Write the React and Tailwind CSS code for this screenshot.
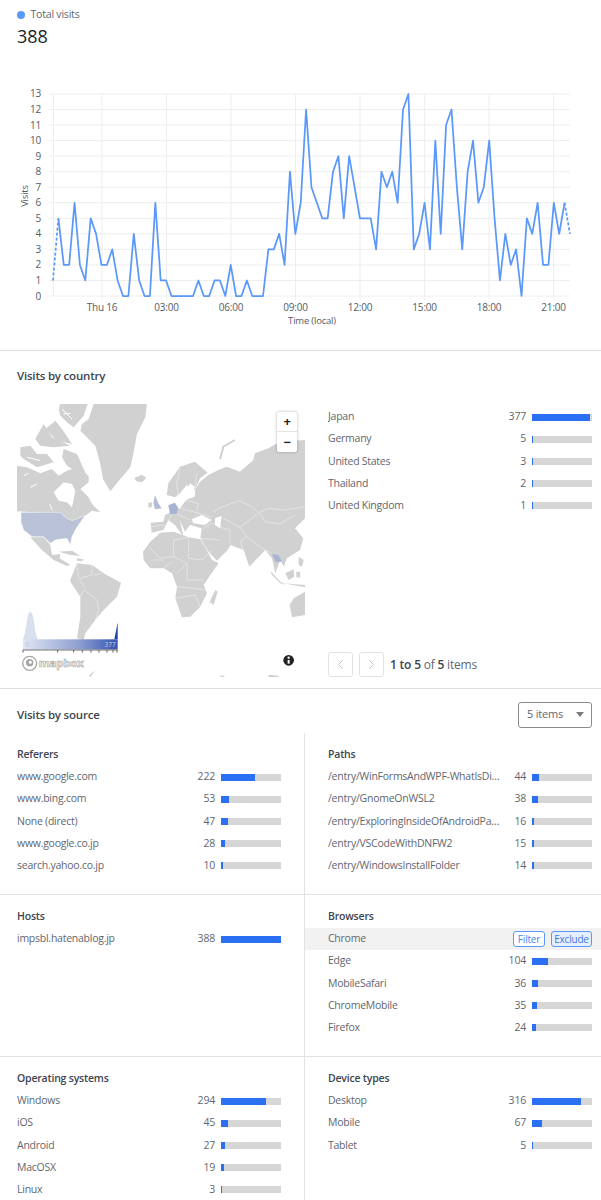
import React from "react";

const visits = [1,5,2,2,6,2,1,5,4,2,2,3,1,0,0,4,1,0,0,6,1,1,0,0,0,0,0,1,0,0,1,1,0,2,0,0,1,0,0,0,3,3,4,2,8,4,6,12,7,6,5,5,8,9,5,9,7,5,5,5,3,8,7,8,6,12,13,3,4,6,3,10,4,11,12,7,3,8,10,6,7,10,5,1,4,2,3,0,5,4,6,2,2,6,4,6,4];

const px = (i) => 53 + i * 5.385;
const py = (v) => 296 - v * 15.54;
const linePoints = (from, to) =>
  visits.slice(from, to + 1).map((v, i) => `${px(from + i)},${py(v)}`).join(" ");

const xTicks = [
  { x: 102, label: "Thu 16" },
  { x: 166.5, label: "03:00" },
  { x: 231, label: "06:00" },
  { x: 295.5, label: "09:00" },
  { x: 360, label: "12:00" },
  { x: 424.6, label: "15:00" },
  { x: 489, label: "18:00" },
  { x: 553.6, label: "21:00" },
];

const VisitsChart = () => (
  <svg viewBox="0 60 601 282" className="block w-[601px] h-[282px]" fontSize="10" fill="#555c66">
    {Array.from({ length: 14 }, (_, v) => (
      <g key={v}>
        <line x1="49" x2="570" y1={py(v)} y2={py(v)} stroke="#eeeeee" />
        <text x="41" y={py(v) + 3.5} textAnchor="end">{v}</text>
      </g>
    ))}
    <line x1="53.5" x2="53.5" y1="94" y2="296" stroke="#eeeeee" />
    {xTicks.map((t) => (
      <g key={t.label}>
        <line x1={t.x} x2={t.x} y1="94" y2="300" stroke="#eeeeee" />
        <text x={t.x} y="311" textAnchor="middle">{t.label}</text>
      </g>
    ))}
    <text x="312" y="324" textAnchor="middle" fontSize="9.5">Time (local)</text>
    <text transform="translate(28,196) rotate(-90)" textAnchor="middle" fontSize="9.5">Visits</text>
    <polyline points={linePoints(1, 95)} fill="none" stroke="#5b98fb" strokeWidth="1.75" strokeLinejoin="round" />
    <polyline points={linePoints(0, 1)} fill="none" stroke="#5b98fb" strokeWidth="1.75" strokeDasharray="3 2" />
    <polyline points={linePoints(95, 96)} fill="none" stroke="#5b98fb" strokeWidth="1.75" strokeDasharray="3 2" />
  </svg>
);

const LAND = "#d1d1d1";

// north america and greenland, traced at 3x from the map's top left
const northLand = [
  "230,0 390,0 385,40 360,90 350,145 340,190 310,225 280,262 258,225 250,180 235,125 190,80 195,60 215,45",
  "352,222 375,212 388,222 375,235 358,232",
  "0,185 30,190 70,208 105,195 125,215 150,200 180,190 215,215 215,235 190,255 215,280 225,300 250,325 225,320 205,335 165,355 130,330 0,322",
  "10,130 40,125 60,150 90,150 110,175 60,190 20,165 10,155",
  "55,105 80,60 105,100 160,125 110,130 70,125",
  "140,135 180,150 200,195 215,225 190,210 150,185 135,160",
  "130,0 212,0 200,35 170,70 150,55 130,35 125,15",
  "85,75 115,50 135,75 165,120 120,110",
];

const EURASIA =
  "32,248 70,245 75,225 90,218 120,205 135,180 165,170 165,150 180,125 205,105 235,90 260,80 300,95 340,60 345,40 385,25 420,5 495,0 495,235 465,265 490,295 480,330 441,355 431,380 421,360 406,400 396,355 376,330 328,380 311,330 271,315 263,330 231,362 206,335 181,295 185,265 150,255 135,275 120,240 130,290 105,255 85,240 70,270 35,278";

const SCANDINAVIA = "80,165 85,130 120,80 165,65 203,98 180,115 165,150 140,135 120,160 105,172";

const asiaBorders = [
  "M220,215 L235,205 L262,195 L298,182 L335,200 L355,218 L385,205 L430,210 L465,205 L495,200",
  "M360,220 L375,245 L420,252 L465,225",
  "M250,235 L300,262 L355,220 M300,262 L320,290 L360,320 L395,340 M270,270 L270,310 M320,290 L300,305 L310,330",
  "M85,240 L100,215 M120,205 L160,215 L215,232 M135,180 L175,190 L170,215 M110,222 L150,240 M165,150 L170,100 M120,85 L110,130 L115,165",
  "M215,250 L250,265 L270,270 M190,265 L215,250 M181,295 L240,300 M30,260 L75,255",
].join(" ");

// south half, traced at 3x from y=530
const southLand = [
  "378,65 400,35 430,8 470,5 515,22 550,28 570,60 585,90 605,100 580,135 560,165 570,190 550,230 520,260 495,262 475,205 480,170 465,130 440,115 400,115 380,90",
  "595,180 602,185 590,225 578,215",
  "864,185 830,205 818,225 825,262 864,255",
  "760,122 790,155 810,165 790,160 765,135",
  "805,130 830,118 832,140 815,150",
  "838,125 850,125 848,145 838,140",
  "845,80 860,90 855,110 845,105",
  "800,160 864,165 864,172",
  "40,22 80,22 100,45 105,75 130,72 128,85 160,105 150,108 110,90 75,60",
  "125,65 165,62 190,78 160,75",
  "180,85 200,88 195,94 180,92",
  "160,150 180,100 225,105 260,130 312,158 300,200 255,245 235,270 205,310 200,330 180,325 190,260 190,200 160,155",
  "215,438 235,420 222,440",
  "610,437 622,437 622,441 610,441",
  "755,434 785,437 785,441 755,441",
];

const southBorders = [
  "M400,55 L430,85 L470,80 L470,30 M470,30 L515,22 M515,25 L515,85 L555,90 M470,80 L510,100 L510,150 L560,150 M440,115 L465,95 M480,170 L530,175 L565,180 M475,205 L535,195 L550,230 M510,100 L480,130 M555,90 L585,60 M400,90 L440,90",
  "M190,200 L200,180 L240,210 L245,240 L235,270 M185,145 L205,175 M225,105 L225,135 L190,145 M180,100 L185,145 M255,130 L230,135",
].join(" ");

const WorldMap = () => (
  <div className="relative w-[288px] h-[273px] overflow-hidden">
    <svg viewBox="17 404 288 273" className="block w-[288px] h-[273px]">
      <defs>
        <linearGradient id="legendRamp" x1="0" x2="1" y1="0" y2="0">
          <stop offset="0" stopColor="#dde3f0" />
          <stop offset="0.6" stopColor="#7f93cc" />
          <stop offset="1" stopColor="#1d42a6" />
        </linearGradient>
      </defs>
      <g transform="translate(17 404) scale(0.3333)">
        {northLand.map((p) => (
          <polygon key={p} points={p} fill={LAND} />
        ))}
        <polygon points="110,265 140,235 165,240 175,262 165,310 150,295 125,290" fill="#ffffff" />
        <path d="M20,215 L35,208 M40,250 L60,240 M98,300 L105,318" stroke="#ffffff" strokeWidth="3" fill="none" />
        <path d="M135,15 L165,45 M140,30 L160,28 M60,125 L105,140 L130,135 M30,160 L70,170" stroke="#ffffff" strokeWidth="3" fill="none" />
        <polygon
          points="12,325 130,325 145,340 165,350 205,335 190,355 180,370 175,378 165,398 160,423 150,403 115,408 100,418 80,398 45,398 20,378 12,355"
          fill="#b9c2d6"
          stroke="#ffffff"
          strokeWidth="1.5"
        />
      </g>
      <g transform="translate(140 440) scale(0.3333)">
        <polygon points={EURASIA} fill={LAND} />
        <polygon points={SCANDINAVIA} fill={LAND} />
        <polygon points="120,205 150,165 165,140 150,130 135,165 115,190" fill="#ffffff" />
        <polygon points="155,238 185,225 215,240 195,255 160,250" fill="#ffffff" />
        <polygon points="225,235 245,228 240,265 225,255" fill="#ffffff" />
        <polyline points="240,58 250,20 285,0" fill="none" stroke={LAND} strokeWidth="6" />
        <path d={asiaBorders} fill="none" stroke="#ffffff" strokeOpacity="0.8" strokeWidth="1.5" />
        <polygon points="45,165 55,190 65,205 45,208 40,190" fill="#b3bed6" />
        <polygon points="24,190 36,186 36,200 26,204" fill={LAND} />
        <polygon points="85,195 105,188 115,205 110,222 90,222" fill="#a8b5d2" />
      </g>
      <g transform="translate(17 530) scale(0.3333)">
        {southLand.map((p) => (
          <polygon key={p} points={p} fill={LAND} />
        ))}
        <path d={southBorders} fill="none" stroke="#ffffff" strokeOpacity="0.8" strokeWidth="1.5" />
        <polygon points="765,72 785,75 795,95 775,95" fill="#a8b5d2" />
        {/* legend */}
        <path d="M18,328 C30,315 30,247 40,247 C50,247 50,315 62,328 Z" fill="#d9e1ef" stroke="#c3cde2" strokeWidth="1.5" />
        <polygon points="292,328 302,278 302,328" fill="#1d42a6" />
        <rect x="18" y="328" width="284" height="30" fill="url(#legendRamp)" fillOpacity="0.9" />
        <path d="M18,360 H302 M18,360 V368 M122,360 V368 M170,360 V368 M196,360 V368 M222,360 V368 M246,360 V368 M270,360 V368 M288,360 V368 M300,360 V368" stroke="#222222" strokeWidth="2" fill="none" />
        <text x="25" y="351" fontSize="20" fill="#bfc6d4">0</text>
        <text x="296" y="351" fontSize="20" fill="#c6cfe6" textAnchor="end">377</text>
        {/* mapbox logo */}
        <circle cx="38" cy="400" r="21" fill="#ffffff" stroke="#a6a6a6" strokeWidth="4" />
        <circle cx="38" cy="398" r="11" fill="#a6a6a6" />
        <circle cx="40" cy="397" r="4.5" fill="#ffffff" />
        <text x="65" y="411" fontSize="33" textLength="135" lengthAdjust="spacingAndGlyphs" fontWeight="700" fill="#ffffff" stroke="#a6a6a6" strokeWidth="2">mapbox</text>
        {/* info */}
        <circle cx="815" cy="391" r="16" fill="#222222" />
        <rect x="812" y="390" width="6" height="11" fill="#ffffff" />
        <circle cx="815" cy="383" r="3.5" fill="#ffffff" />
      </g>
    </svg>
    <div className="absolute left-[260px] top-[8px] w-[20px] h-[40px] flex flex-col bg-white rounded-[2px] shadow-[0_0_3px_rgba(0,0,0,0.3)] text-[#222] font-bold text-[13px]">
      <div className="h-[20px] flex items-center justify-center border-b border-[#e4e4e4] leading-none">+</div>
      <div className="h-[20px] flex items-center justify-center leading-none">−</div>
    </div>
  </div>
);

const Row = ({ label, value, className = "", highlighted }) => (
  <div className={`h-[22.2px] flex items-center ${highlighted ? "bg-[#f2f2f2]" : ""} ${className}`}>
    <div className="flex-1 min-w-0 truncate tracking-[-0.25px]">{label}</div>
    {highlighted ? (
      <div className="flex items-center gap-[6px]">
        <button className="w-[32px] h-[16px] rounded-[3px] border border-[#5b98fb] bg-white text-[#4a86ee] text-[10px] leading-none">Filter</button>
        <button className="w-[41px] h-[16px] rounded-[3px] border border-[#5b98fb] bg-[#e6efff] text-[#3f78dc] text-[10px] leading-none">Exclude</button>
      </div>
    ) : (
      <>
        <div className="w-[26px] shrink-0 text-right">{value}</div>
        <div className="ml-[6px] w-[60px] h-[7px] bg-[#d6d6d6]">
          <div className="h-full bg-[#2b6ff2]" style={{ width: `${Math.max((value / 388) * 100, 1.5)}%` }} />
        </div>
      </>
    )}
  </div>
);

const Card = ({ title, rows, right, height }) => {
  const pad = right ? "pl-[23px] pr-[9px]" : "pl-[17px] pr-[23px]";
  return (
    <div className={`${height} pt-[11px] ${right ? "" : "border-r border-[#e2e2e2]"}`}>
      <div className={`${pad} h-[22px] flex items-center font-semibold text-[#3d4550]`}>{title}</div>
      {rows.map((r) => (
        <Row key={r.label} label={r.label} value={r.value} highlighted={r.highlighted} className={pad} />
      ))}
    </div>
  );
};

const countries = [
  { label: "Japan", value: 377 },
  { label: "Germany", value: 5 },
  { label: "United States", value: 3 },
  { label: "Thailand", value: 2 },
  { label: "United Kingdom", value: 1 },
];

const cards = [
  {
    title: "Referers",
    rows: [
      { label: "www.google.com", value: 222 },
      { label: "www.bing.com", value: 53 },
      { label: "None (direct)", value: 47 },
      { label: "www.google.co.jp", value: 28 },
      { label: "search.yahoo.co.jp", value: 10 },
    ],
  },
  {
    title: "Paths",
    rows: [
      { label: "/entry/WinFormsAndWPF-WhatIsDifference", value: 44 },
      { label: "/entry/GnomeOnWSL2", value: 38 },
      { label: "/entry/ExploringInsideOfAndroidPackage", value: 16 },
      { label: "/entry/VSCodeWithDNFW2", value: 15 },
      { label: "/entry/WindowsInstallFolder", value: 14 },
    ],
  },
  { title: "Hosts", rows: [{ label: "impsbl.hatenablog.jp", value: 388 }] },
  {
    title: "Browsers",
    rows: [
      { label: "Chrome", value: 187, highlighted: true },
      { label: "Edge", value: 104 },
      { label: "MobileSafari", value: 36 },
      { label: "ChromeMobile", value: 35 },
      { label: "Firefox", value: 24 },
    ],
  },
  {
    title: "Operating systems",
    rows: [
      { label: "Windows", value: 294 },
      { label: "iOS", value: 45 },
      { label: "Android", value: 27 },
      { label: "MacOSX", value: 19 },
      { label: "Linux", value: 3 },
    ],
  },
  {
    title: "Device types",
    rows: [
      { label: "Desktop", value: 316 },
      { label: "Mobile", value: 67 },
      { label: "Tablet", value: 5 },
    ],
  },
];

export default function App() {
  return (
    <div className="w-[601px] h-[1200px] overflow-hidden bg-white text-[#5f666f] text-[10.5px] tracking-[-0.2px] font-['Open_Sans','Noto_Sans',sans-serif]">
      <section className="h-[351px] border-b border-[#dedede]">
        <div className="h-[60px] px-[17px] pt-[7px]">
          <div className="flex items-center h-[15px]">
            <span className="w-[8px] h-[8px] rounded-full bg-[#5b98fb]" />
            <span className="ml-[5.5px]">Total visits</span>
          </div>
          <div className="mt-[2px] text-[18px] leading-[24px] font-medium tracking-normal text-[#1c1f24]">388</div>
        </div>
        <VisitsChart />
      </section>

      <section className="h-[338px] border-b border-[#dedede]">
        <h2 className="px-[17px] pt-[16px] h-[53px] text-[11.5px] leading-[18px] font-semibold text-[#3d4550]">Visits by country</h2>
        <div className="flex">
          <div className="ml-[17px]">
            <WorldMap />
          </div>
          <div className="ml-[23px] w-[264px] h-[273px] flex flex-col justify-between">
            <div className="pt-[2px]">
              {countries.map((c) => (
                <Row key={c.label} label={c.label} value={c.value} />
              ))}
            </div>
            <div className="flex items-center">
              <button className="w-[25px] h-[25px] flex items-center justify-center border border-[#e2e2e2] rounded-[3px]">
                <svg width="7" height="11" viewBox="0 0 7 11" fill="none" stroke="#c4c4c4"><path d="M6 1 1.5 5.5 6 10" /></svg>
              </button>
              <button className="ml-[6px] w-[25px] h-[25px] flex items-center justify-center border border-[#e2e2e2] rounded-[3px]">
                <svg width="7" height="11" viewBox="0 0 7 11" fill="none" stroke="#c4c4c4"><path d="M1 1l4.5 4.5L1 10" /></svg>
              </button>
              <span className="ml-[6px] text-[12px]">
                <b className="font-semibold text-[#3d4550]">1 to 5</b> of <b className="font-semibold text-[#3d4550]">5</b> items
              </span>
            </div>
          </div>
        </div>
      </section>

      <section>
        <div className="h-[44px] pl-[17px] pr-[9px] flex items-center justify-between">
          <h2 className="text-[11.5px] leading-[18px] font-semibold text-[#3d4550] pt-[8px]">Visits by source</h2>
          <div className="mt-[7px] w-[74px] h-[26px] pl-[8px] pr-[7px] flex items-center justify-between border border-[#8a8a8a] rounded-[3px] text-[11px]">
            <span>5 items</span>
            <svg width="8" height="5" viewBox="0 0 8 5"><path d="M0 0h8L4 5z" fill="#7a7a7a" /></svg>
          </div>
        </div>
        <div className="grid grid-cols-[305px_296px]">
          {cards.map((c, i) => (
            <Card
              key={c.title}
              title={c.title}
              rows={c.rows}
              right={i % 2 === 1}
              height={`${i < 4 ? "h-[162px] " : "h-[150px] "}${i < 4 ? "border-b border-[#e2e2e2]" : ""}`}
            />
          ))}
        </div>
      </section>
    </div>
  );
}
